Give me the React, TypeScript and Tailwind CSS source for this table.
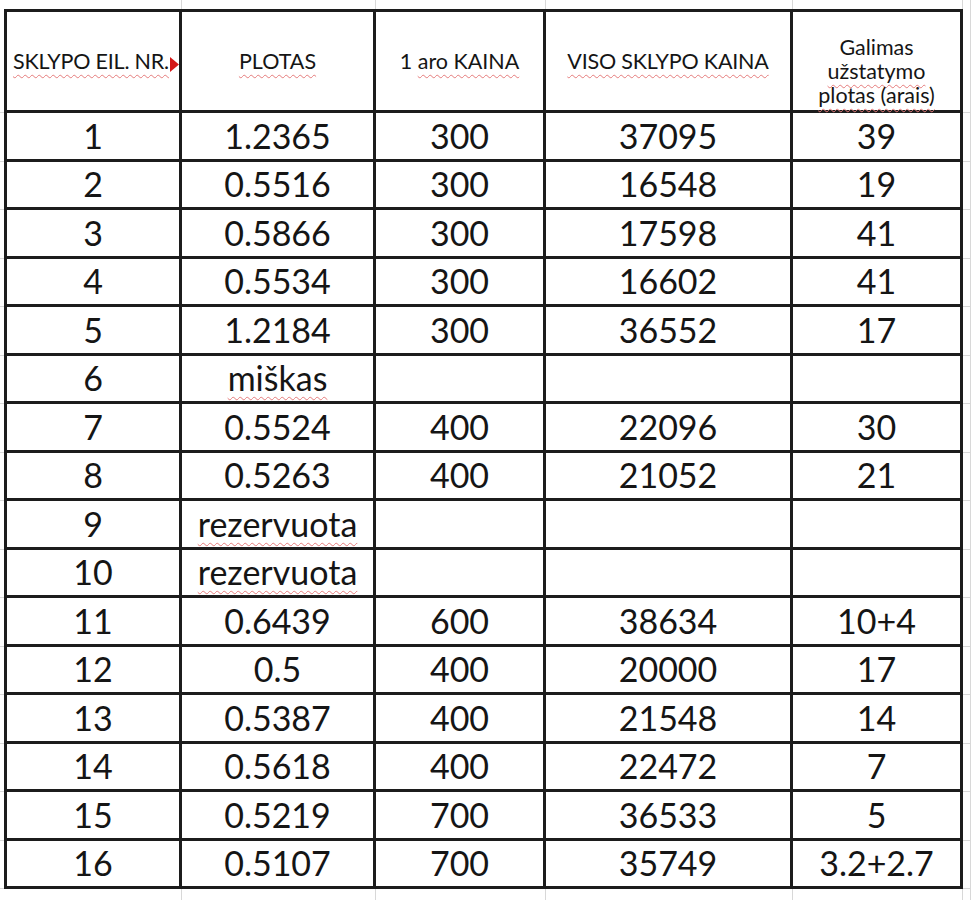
import React from "react";

type Row = [string, string, string, string, string];

const rows: Row[] = [
  ["1", "1.2365", "300", "37095", "39"],
  ["2", "0.5516", "300", "16548", "19"],
  ["3", "0.5866", "300", "17598", "41"],
  ["4", "0.5534", "300", "16602", "41"],
  ["5", "1.2184", "300", "36552", "17"],
  ["6", "miškas", "", "", ""],
  ["7", "0.5524", "400", "22096", "30"],
  ["8", "0.5263", "400", "21052", "21"],
  ["9", "rezervuota", "", "", ""],
  ["10", "rezervuota", "", "", ""],
  ["11", "0.6439", "600", "38634", "10+4"],
  ["12", "0.5", "400", "20000", "17"],
  ["13", "0.5387", "400", "21548", "14"],
  ["14", "0.5618", "400", "22472", "7"],
  ["15", "0.5219", "700", "36533", "5"],
  ["16", "0.5107", "700", "35749", "3.2+2.7"],
];

// words that the spell checker underlines
const flagged = ["miškas", "rezervuota"];

const squiggle = "underline decoration-wavy decoration-[#e57b7b] decoration-1 underline-offset-[5px]";

// light sheet gridlines around the table
function Pad({ r = false, b = false }: { r?: boolean; b?: boolean }) {
  return (
    <div
      className={`${r ? "border-r border-r-[#d8d8d8]" : ""} ${b ? "border-b border-b-[#d8d8d8]" : ""}`}
    />
  );
}

function Cell({
  children,
  first = false,
  top = false,
  className = "",
}: {
  children?: React.ReactNode;
  first?: boolean;
  top?: boolean;
  className?: string;
}) {
  return (
    <div
      className={`relative flex items-center justify-center border-r-[3px] border-b-[3px] border-[#1c1c1c] bg-white ${
        first ? "border-l-[3px]" : ""
      } ${top ? "border-t-[3px]" : ""} ${className}`}
    >
      {children}
    </div>
  );
}

export default function App() {
  return (
    <div className="h-[900px] w-[971px] overflow-hidden bg-white font-[family-name:Lato,sans-serif] text-[#151515]">
      <div className="grid grid-cols-[4px_178px_194px_170px_247px_170px_8px] grid-rows-[9px_104px_repeat(16,48.5px)_11px]">
        {/* top strip */}
        <Pad />
        <Pad r />
        <Pad r />
        <Pad r />
        <Pad r />
        <Pad r />
        <Pad r />

        {/* header */}
        <Pad b />
        <Cell first top className="justify-start overflow-visible pl-[6px]">
          <span className={`whitespace-nowrap text-[21.5px] tracking-[-0.2px] ${squiggle}`}>SKLYPO EIL. NR.</span>
          <svg className="absolute right-0 top-[45px]" width="9" height="15" viewBox="0 0 9 15">
            <polygon points="0,0 9,7.5 0,15" fill="#d41818" />
          </svg>
        </Cell>
        <Cell top>
          <span className={`text-[21.5px] ${squiggle}`}>PLOTAS</span>
        </Cell>
        <Cell top>
          <span className="text-[21.5px]">
            1 <span className={squiggle}>aro KAINA</span>
          </span>
        </Cell>
        <Cell top>
          <span className={`text-[21.5px] tracking-[-0.2px] ${squiggle}`}>VISO SKLYPO KAINA</span>
        </Cell>
        <Cell top className="pt-[20px]">
          <div className="flex flex-col items-center text-[21.5px] leading-[24px]">
            <span>Galimas</span>
            <span className={squiggle}>užstatymo</span>
            <span className={squiggle}>plotas (arais)</span>
          </div>
        </Cell>
        <Pad r b />

        {/* data rows */}
        {rows.map((row) => (
          <React.Fragment key={row[0]}>
            <Pad b />
            {row.map((v, i) => (
              <Cell key={i} first={i === 0}>
                <span className={`text-[34px] leading-none ${flagged.includes(v) ? squiggle : ""}`}>{v}</span>
              </Cell>
            ))}
            <Pad r b />
          </React.Fragment>
        ))}

        {/* bottom strip */}
        <Pad />
        <Pad r />
        <Pad r />
        <Pad r />
        <Pad r />
        <Pad r />
        <Pad r />
      </div>
    </div>
  );
}
